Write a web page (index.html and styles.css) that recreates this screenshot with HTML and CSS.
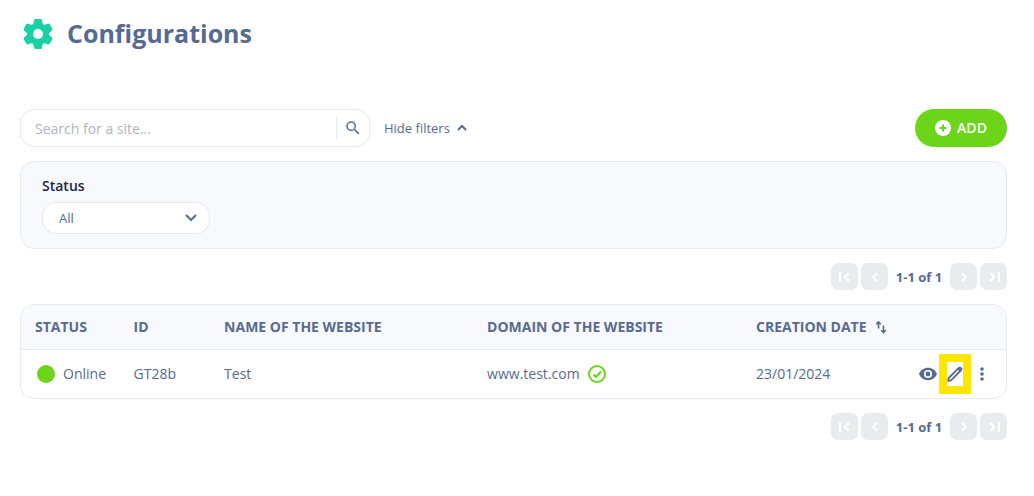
FILE: index.html
```html
<!DOCTYPE html>
<html lang="en">

<head>
  <meta charset="UTF-8">
  <meta name="viewport" content="width=device-width, initial-scale=1.0">
  <title>Configurations</title>
  <link rel="stylesheet" href="styles.css">
</head>

<body>
  <!-- shared icons -->
  <svg class="sprite" aria-hidden="true">
    <symbol id="first" viewBox="0 0 20 20">
      <path d="M5 5v10M14 6l-4 4 4 4" />
    </symbol>
    <symbol id="prev" viewBox="0 0 20 20">
      <path d="m12 6-4 4 4 4" />
    </symbol>
    <symbol id="next" viewBox="0 0 20 20">
      <path d="m8 6 4 4-4 4" />
    </symbol>
    <symbol id="last" viewBox="0 0 20 20">
      <path d="M15 5v10M6 6l4 4-4 4" />
    </symbol>
  </svg>

  <header class="page-header">
    <svg class="gear" viewBox="0 0 30 30" aria-hidden="true">
      <g class="teeth">
        <path d="M12.500 1.500h5l1 5h-7z" />
        <path d="M12.500 1.500h5l1 5h-7z" transform="rotate(60 15 15)" />
        <path d="M12.500 1.500h5l1 5h-7z" transform="rotate(120 15 15)" />
        <path d="M12.500 1.500h5l1 5h-7z" transform="rotate(180 15 15)" />
        <path d="M12.500 1.500h5l1 5h-7z" transform="rotate(240 15 15)" />
        <path d="M12.500 1.500h5l1 5h-7z" transform="rotate(300 15 15)" />
      </g>
      <circle class="ring" cx="15" cy="15" r="8" />
    </svg>
    <h1>Configurations</h1>
  </header>

  <main>
    <div class="toolbar">
      <form class="search">
        <input type="text" placeholder="Search for a site..." aria-label="Search for a site">
        <button type="button" aria-label="Search">
          <svg viewBox="0 0 24 24">
            <path d="M15.5 14h-.8l-.3-.3A6.5 6.5 0 1 0 13.700 14.400l.3.300v.8l5 5 1.500-1.500zM9.500 14a4.500 4.500 0 1 1 0-9 4.500 4.500 0 0 1 0 9z" />
          </svg>
        </button>
      </form>
      <button type="button" class="toggle-filters">
        Hide filters
        <svg viewBox="0 0 12 12"><path d="m2 8 4-4 4 4" /></svg>
      </button>
      <button type="button" class="add">
        <svg viewBox="0 0 16 16">
          <circle cx="8" cy="8" r="8" />
          <path d="M8 4.500v7M4.500 8h7" />
        </svg>
        ADD
      </button>
    </div>

    <section class="filters">
      <label for="status">Status</label>
      <div class="select">
        <select id="status">
          <option>All</option>
        </select>
        <svg viewBox="0 0 12 12"><path d="m1 3 5 5 5-5" /></svg>
      </div>
    </section>

    <nav class="pagination" aria-label="Pages">
      <button type="button" aria-label="First page"><svg><use href="#first" /></svg></button>
      <button type="button" aria-label="Previous page"><svg><use href="#prev" /></svg></button>
      <span>1-1 of 1</span>
      <button type="button" aria-label="Next page"><svg><use href="#next" /></svg></button>
      <button type="button" aria-label="Last page"><svg><use href="#last" /></svg></button>
    </nav>

    <div class="sites">
      <table>
        <thead>
          <tr>
            <th class="col-status">STATUS</th>
            <th class="col-id">ID</th>
            <th class="col-name">NAME OF THE WEBSITE</th>
            <th class="col-domain">DOMAIN OF THE WEBSITE</th>
            <th class="col-date" colspan="2">
              <div class="cell">
                CREATION DATE
                <svg class="sort" viewBox="0 0 12 14">
                  <path d="M3.500 8.500V2.500M1.200 4.300 3.500 2l2.300 2.300M8.500 5.500v6.500M6.200 10.200l2.300 2.300 2.300-2.300" />
                </svg>
              </div>
            </th>
          </tr>
        </thead>
        <tbody>
          <tr>
            <td><div class="cell"><span class="dot"></span>Online</div></td>
            <td>GT28b</td>
            <td>Test</td>
            <td>
              <div class="cell">
                www.test.com
                <svg class="check" viewBox="0 0 18 18">
                  <circle cx="9" cy="9" r="8" />
                  <path d="m5.500 9.500 2.500 2.500 5-5.500" />
                </svg>
              </div>
            </td>
            <td>23/01/2024</td>
            <td>
              <div class="actions">
                <button type="button" aria-label="View">
                  <svg class="eye" viewBox="1 4 22 16">
                    <path fill-rule="evenodd" d="M12 4.500C7 4.500 2.700 7.600 1 12c1.700 4.400 6 7.500 11 7.500s9.300-3.100 11-7.500c-1.700-4.400-6-7.500-11-7.500zM12 17a5 5 0 1 1 0-10 5 5 0 0 1 0 10zm0-8a3 3 0 1 0 0 6 3 3 0 0 0 0-6z" />
                  </svg>
                </button>
                <button type="button" class="highlight" aria-label="Edit">
                  <svg class="pencil" viewBox="0 0 16 16">
                    <path class="body" d="M1.200 14.800 1.700 12 11.500 2.200l2.300 2.300L4 14.300z" />
                    <path class="tip" d="m10 3 2-2q1-1 2 0l1 1q1 1 0 2l-2 2z" />
                  </svg>
                </button>
                <button type="button" aria-label="More">
                  <svg class="dots" viewBox="0 0 4 14">
                    <circle cx="2" cy="2" r="1.800" />
                    <circle cx="2" cy="7" r="1.800" />
                    <circle cx="2" cy="12" r="1.800" />
                  </svg>
                </button>
              </div>
            </td>
          </tr>
        </tbody>
      </table>
    </div>

    <nav class="pagination" aria-label="Pages, bottom">
      <button type="button" aria-label="First page"><svg><use href="#first" /></svg></button>
      <button type="button" aria-label="Previous page"><svg><use href="#prev" /></svg></button>
      <span>1-1 of 1</span>
      <button type="button" aria-label="Next page"><svg><use href="#next" /></svg></button>
      <button type="button" aria-label="Last page"><svg><use href="#last" /></svg></button>
    </nav>
  </main>
</body>

</html>
```
FILE: styles.css
```css
* {
  margin: 0;
  padding: 0;
  box-sizing: border-box;
}

body {
  background-color: #ffffff;
  color: #566a92;
  font-family: "Open Sans", sans-serif;
  font-size: 14px;
  line-height: 20px;
  padding: 14px 27px 14px 20px;
}

button,
input,
select {
  font: inherit;
  color: inherit;
  background: none;
  border: none;
}

button {
  display: flex;
  align-items: center;
  justify-content: center;
  cursor: pointer;
}

svg {
  display: block;
  flex: none;
  fill: currentColor;
}

.sprite {
  display: none;
}

.page-header {
  display: flex;
  align-items: center;
  gap: 14px;
  height: 40px;
  padding-left: 3px;
  margin-bottom: 55px;
}

.gear {
  width: 30px;
  height: 30px;
  color: #18d2a4;
  stroke: currentColor;
  stroke-linejoin: round;
}

.gear .teeth {
  stroke-width: 3;
}

.gear .ring {
  fill: none;
  stroke-width: 6;
}

h1 {
  padding-bottom: 2px;
  font-size: 25px;
  line-height: 36px;
  font-weight: 700;
}

.toolbar {
  display: flex;
  align-items: center;
  gap: 14px;
  height: 38px;
  margin-bottom: 14px;
}

.search {
  display: flex;
  align-items: center;
  width: 350px;
  height: 38px;
  border: 1px solid #e8ebee;
  border-radius: 14px;
}

.search input {
  flex: 1;
  min-width: 0;
  height: 36px;
  padding-left: 14px;
  outline: none;
}

.search input::placeholder {
  color: #adb5bf;
  opacity: 1;
}

.search button {
  width: 33px;
  height: 22px;
  border-left: 1px solid #e8ebee;
}

.search svg {
  width: 18px;
  height: 18px;
}

.toggle-filters {
  gap: 6px;
  font-size: 13px;
}

.toggle-filters svg,
.select svg {
  width: 12px;
  height: 12px;
  fill: none;
  stroke: currentColor;
  stroke-width: 2;
}

.add {
  gap: 6px;
  width: 92px;
  height: 38px;
  margin-left: auto;
  border-radius: 19px;
  background-color: #6dd519;
  color: #ffffff;
  font-weight: 600;
}

.add svg {
  width: 16px;
  height: 16px;
}

.add path {
  stroke: #6dd519;
  stroke-width: 2;
}

.filters {
  padding: 14px 21px;
  border: 1px solid #e5eaef;
  border-radius: 14px;
  background-color: #f8f9fd;
  margin-bottom: 14px;
}

.filters label {
  display: block;
  margin-bottom: 6px;
  color: #1c2646;
  font-weight: 600;
}

.select {
  display: flex;
  align-items: center;
  width: 168px;
  height: 32px;
  border: 1px solid #e5eaef;
  border-radius: 14px;
  background-color: #ffffff;
}

.select select {
  flex: 1;
  height: 30px;
  padding: 0 28px 0 16px;
  margin-right: -24px;
  appearance: none;
  font-size: 13px;
}

.select svg {
  margin-right: 12px;
  pointer-events: none;
}

.pagination {
  display: flex;
  align-items: center;
  justify-content: flex-end;
  gap: 3px;
  height: 27px;
  margin-bottom: 14px;
}

.pagination button {
  width: 27px;
  height: 27px;
  border-radius: 7px;
  background-color: #e9ecef;
  color: #ffffff;
}

.pagination svg {
  width: 20px;
  height: 20px;
  fill: none;
  stroke: currentColor;
  stroke-width: 2;
}

.pagination span {
  min-width: 48px;
  margin: 0 4px;
  text-align: center;
  font-size: 13px;
  font-weight: 700;
}

.sites {
  border: 1px solid #e8ebee;
  border-radius: 14px;
  overflow: hidden;
  margin-bottom: 14px;
}

table {
  width: 100%;
  border-collapse: separate;
  border-spacing: 0;
}

th,
td {
  padding-left: 14px;
  text-align: left;
  white-space: nowrap;
}

th {
  height: 45px;
  background-color: #f8f9fd;
  border-bottom: 1px solid #e8ebee;
  font-weight: 700;
}

td {
  height: 48px;
}

.col-status {
  width: 10%;
}

.col-id {
  width: 9.2%;
}

.col-name {
  width: 26.7%;
}

.col-domain {
  width: 27.3%;
}

.cell {
  display: flex;
  align-items: center;
  gap: 8px;
}

.dot {
  width: 18px;
  height: 18px;
  margin-left: 2px;
  border-radius: 50%;
  background-color: #6dd519;
}

.sort {
  width: 12px;
  height: 14px;
  fill: none;
  stroke: currentColor;
  stroke-width: 1.6;
}

.check {
  width: 18px;
  height: 18px;
  fill: none;
  stroke: #6dd519;
  stroke-width: 2;
}

.actions {
  display: flex;
  align-items: center;
  justify-content: flex-end;
  gap: 1px;
  padding-right: 14px;
}

.actions button {
  width: 20px;
  height: 40px;
}

.actions .highlight {
  width: 32px;
  border: 8px solid #ffe600;
}

.eye {
  width: 18px;
  height: 14px;
}

.pencil {
  width: 16px;
  height: 16px;
}

.pencil .body {
  fill: none;
  stroke: currentColor;
  stroke-width: 1.8;
  stroke-linejoin: round;
}

.dots {
  width: 4px;
  height: 14px;
}
```
